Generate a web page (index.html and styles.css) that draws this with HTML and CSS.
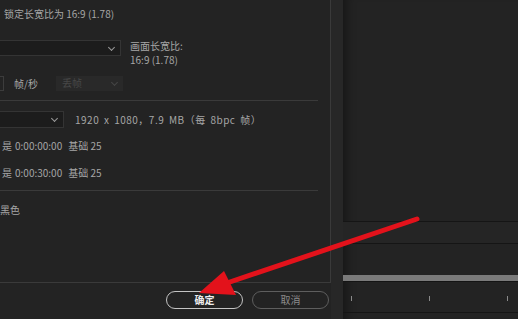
FILE: index.html
```html
<!DOCTYPE html>
<html lang="zh-CN">
<head>
    <meta charset="UTF-8">
    <meta name="viewport" content="width=device-width, initial-scale=1.0">
    <title>序列设置</title>
    <link rel="stylesheet" href="styles.css">
</head>
<body>
    <div class="screen">
        <div class="dialog">
            <div class="panel">
                <div class="row lock">锁定长宽比为 16:9 (1.78)</div>

                <div class="row frame">
                    <div class="select wide"><span class="chev"></span></div>
                    <div class="aspect">
                        <div>画面长宽比:</div>
                        <div>16:9 (1.78)</div>
                    </div>
                </div>

                <div class="row fps">
                    <span class="field-edge"></span>
                    <span class="fps-label">帧/秒</span>
                    <div class="select disabled">丢帧<span class="chev"></span></div>
                </div>

                <div class="sep"></div>

                <div class="row format">
                    <div class="select short"><span class="chev"></span></div>
                    <span class="info">1920 x 1080，7.9 MB（每 8bpc 帧）</span>
                </div>

                <div class="row tc"><span>是</span><span class="code">0:00:00:00</span><span>基础 25</span></div>
                <div class="row tc second"><span>是</span><span class="code">0:00:30:00</span><span>基础 25</span></div>

                <div class="sep"></div>

                <div class="row tc black">黑色</div>
            </div>

            <div class="actions">
                <button class="btn primary">确定</button>
                <button class="btn">取消</button>
            </div>
        </div>

        <div class="gutter"></div>

        <div class="timeline">
            <div class="tl-top"></div>
            <div class="tl-track"></div>
            <div class="tl-gap"></div>
            <div class="tl-bar"></div>
            <div class="ruler">
                <span class="tick"></span>
                <span class="tick"></span>
                <span class="tick"></span>
            </div>
        </div>

        <!-- red annotation arrow pointing at the OK button -->
        <svg class="arrow" width="518" height="319" viewBox="0 0 518 319">
            <line x1="417" y1="219" x2="224" y2="284" stroke="#e3121b" stroke-width="5" stroke-linecap="round"/>
            <polygon points="199,293 224,271 236,295" fill="#e3121b"/>
        </svg>
    </div>
</body>
</html>
```

FILE: styles.css
```css
body {
    margin: 0;
    padding: 0;
    background-color: #232323;
    font-family: "Noto Sans CJK SC", "Noto Sans", sans-serif;
    font-size: 10px;
    color: #a6a6a6;
}

.screen {
    position: relative;
    display: flex;
    width: 518px;
    height: 319px;
    overflow: hidden;
}

.dialog {
    width: 331px;
    display: flex;
    flex-direction: column;
}

.panel {
    height: 282px;
    padding-right: 12px;
    border-right: 1px solid #3a3a3a;
    border-bottom: 1px solid #3a3a3a;
}

.row {
    display: flex;
    align-items: center;
    white-space: nowrap;
}

.lock {
    height: 26px;
    padding-left: 4px;
}

.frame {
    margin-top: 14px;
    height: 28px;
    align-items: flex-start;
}

.select {
    position: relative;
    height: 16px;
    background-color: #1c1c1c;
    border: 1px solid #343434;
    border-left: none;
    box-sizing: border-box;
}

.select.wide {
    width: 121px;
}

.select.short {
    width: 64px;
    height: 17px;
}

.chev {
    position: absolute;
    right: 6px;
    top: 4px;
    width: 4px;
    height: 4px;
    border-right: 1px solid #9a9a9a;
    border-bottom: 1px solid #9a9a9a;
    transform: rotate(45deg);
}

.aspect {
    margin-left: 9px;
    margin-top: -1px;
    line-height: 14px;
}

.fps {
    margin-top: 8px;
    height: 15px;
}

.field-edge {
    width: 4px;
    height: 15px;
    box-sizing: border-box;
    border: 1px solid #3c3c3c;
    border-left: none;
}

.fps-label {
    margin-left: 10px;
}

.select.disabled {
    margin-left: 18px;
    width: 67px;
    height: 15px;
    padding-left: 6px;
    line-height: 14px;
    color: #474747;
    background-color: #292929;
    border: none;
}

.select.disabled .chev {
    border-color: #454545;
}

.sep {
    margin-top: 9px;
    height: 1px;
    background-color: #3a3a3a;
}

.format {
    margin-top: 10px;
    height: 17px;
}

.info {
    margin-left: 11px;
    letter-spacing: 0.5px;
    word-spacing: 2px;
}

.tc {
    margin-top: 8px;
    height: 18px;
    padding-left: 2px;
}

.tc.second {
    margin-top: 9px;
}

.tc.black {
    margin-top: 9px;
    padding-left: 0;
}

.code {
    margin: 0 6px 0 3px;
}

.actions {
    display: flex;
    justify-content: flex-end;
    gap: 9px;
    padding: 8px 2px 0 0;
}

.btn {
    width: 77px;
    height: 18px;
    padding: 0;
    border-radius: 9px;
    border: 1px solid #5e5e5e;
    background-color: #232323;
    color: #8c8c8c;
    font-family: "Noto Sans CJK SC", sans-serif;
    font-size: 10px;
    line-height: 16px;
}

.btn.primary {
    border-color: #c4c4c4;
    color: #ededed;
    font-weight: bold;
}

.gutter {
    width: 12px;
    background-color: #272727;
}

.timeline {
    flex: 1;
    display: flex;
    flex-direction: column;
    box-shadow: inset 12px 0 10px -8px rgba(0, 0, 0, 0.35);
}

.tl-top {
    height: 221px;
}

.tl-track {
    height: 21px;
    border-top: 1px solid #151515;
    border-bottom: 1px solid #151515;
    background-color: #252525;
}

.tl-gap {
    height: 31px;
}

.tl-bar {
    height: 6px;
    background-color: #7a7a7a;
    border-bottom: 1px solid #141414;
}

.ruler {
    display: flex;
    gap: 77px;
    height: 31px;
    padding: 14px 0 0 8px;
    box-sizing: border-box;
    border-bottom: 1px solid #151515;
}

.tick {
    width: 1px;
    height: 5px;
    background-color: #8a8a8a;
}

.arrow {
    position: absolute;
    left: 0;
    top: 0;
    pointer-events: none;
}
```
